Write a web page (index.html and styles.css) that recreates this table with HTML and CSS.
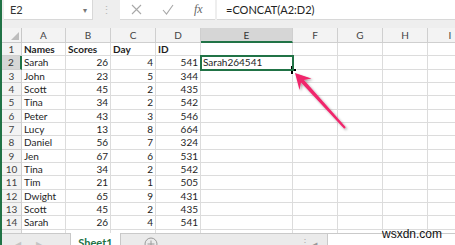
FILE: index.html
```html
<!DOCTYPE html>
<html>
<head>
<meta charset="utf-8">
<link rel="stylesheet" href="styles.css">
</head>
<body>
<div class="app">
  <div class="toolbar">
    <div class="namebox"><span>E2</span><span class="dd">▾</span></div>
    <div class="sep">⋮</div>
    <div class="icons">
      <svg width="94" height="20" viewBox="0 0 94 20">
        <path d="M12 5 L21 14 M21 5 L12 14" stroke="#a8a8a8" stroke-width="1.1" fill="none"/>
        <path d="M43 10 L46.5 14 L53 5" stroke="#a8a8a8" stroke-width="1.1" fill="none"/>
      </svg>
      <span class="fx">fx</span>
    </div>
    <div class="formula">=CONCAT(A2:D2)</div>
  </div>
  <div class="sheet">
    <div class="grid">
      <div class="corner"><svg width="10" height="10" viewBox="0 0 10 10"><path d="M9 1 L9 9 L1 9 Z" fill="#bdbdbd"/></svg></div>
      <div class="ch">A</div><div class="ch">B</div><div class="ch">C</div><div class="ch">D</div><div class="ch ch-sel">E</div><div class="ch">F</div><div class="ch">G</div><div class="ch">H</div><div class="ch">I</div>

      <div class="rh">1</div><div class="c b">Names</div><div class="c b">Scores</div><div class="c b">Day</div><div class="c b">ID</div><div class="c"></div><div class="c"></div><div class="c"></div><div class="c"></div><div class="c"></div>
      <div class="rh rh-sel">2</div><div class="c">Sarah</div><div class="c n">26</div><div class="c n">4</div><div class="c n">541</div><div class="c sel">Sarah264541</div><div class="c"></div><div class="c"></div><div class="c"></div><div class="c"></div>
      <div class="rh">3</div><div class="c">John</div><div class="c n">23</div><div class="c n">5</div><div class="c n">344</div><div class="c"></div><div class="c"></div><div class="c"></div><div class="c"></div><div class="c"></div>
      <div class="rh">4</div><div class="c">Scott</div><div class="c n">45</div><div class="c n">2</div><div class="c n">435</div><div class="c"></div><div class="c"></div><div class="c"></div><div class="c"></div><div class="c"></div>
      <div class="rh">5</div><div class="c">Tina</div><div class="c n">34</div><div class="c n">2</div><div class="c n">542</div><div class="c"></div><div class="c"></div><div class="c"></div><div class="c"></div><div class="c"></div>
      <div class="rh">6</div><div class="c">Peter</div><div class="c n">43</div><div class="c n">3</div><div class="c n">546</div><div class="c"></div><div class="c"></div><div class="c"></div><div class="c"></div><div class="c"></div>
      <div class="rh">7</div><div class="c">Lucy</div><div class="c n">13</div><div class="c n">8</div><div class="c n">664</div><div class="c"></div><div class="c"></div><div class="c"></div><div class="c"></div><div class="c"></div>
      <div class="rh">8</div><div class="c">Daniel</div><div class="c n">56</div><div class="c n">7</div><div class="c n">324</div><div class="c"></div><div class="c"></div><div class="c"></div><div class="c"></div><div class="c"></div>
      <div class="rh">9</div><div class="c">Jen</div><div class="c n">67</div><div class="c n">6</div><div class="c n">531</div><div class="c"></div><div class="c"></div><div class="c"></div><div class="c"></div><div class="c"></div>
      <div class="rh">10</div><div class="c">Tina</div><div class="c n">34</div><div class="c n">2</div><div class="c n">542</div><div class="c"></div><div class="c"></div><div class="c"></div><div class="c"></div><div class="c"></div>
      <div class="rh">11</div><div class="c">Tim</div><div class="c n">21</div><div class="c n">1</div><div class="c n">505</div><div class="c"></div><div class="c"></div><div class="c"></div><div class="c"></div><div class="c"></div>
      <div class="rh">12</div><div class="c">Dwight</div><div class="c n">65</div><div class="c n">9</div><div class="c n">431</div><div class="c"></div><div class="c"></div><div class="c"></div><div class="c"></div><div class="c"></div>
      <div class="rh">13</div><div class="c">Scott</div><div class="c n">45</div><div class="c n">2</div><div class="c n">435</div><div class="c"></div><div class="c"></div><div class="c"></div><div class="c"></div><div class="c"></div>
      <div class="rh">14</div><div class="c">Sarah</div><div class="c n">26</div><div class="c n">4</div><div class="c n">541</div><div class="c"></div><div class="c"></div><div class="c"></div><div class="c"></div><div class="c"></div>
      <div class="rh">15</div><div class="c"></div><div class="c"></div><div class="c"></div><div class="c"></div><div class="c"></div><div class="c"></div><div class="c"></div><div class="c"></div><div class="c"></div>
    </div>
  </div>
  <div class="tabbar">
    <div class="nav"><span>◀</span><span>▶</span></div>
    <div class="tab">Sheet1</div>
    <div class="add"><svg width="14" height="14" viewBox="0 0 14 14"><circle cx="7" cy="7" r="6" fill="none" stroke="#9a9a9a" stroke-width="1"/><path d="M7 3.5 V10.5 M3.5 7 H10.5" stroke="#9a9a9a" stroke-width="1"/></svg></div>
    <div class="spacer"></div>
    <div class="sep2">⋮</div>
    <div class="left">◀</div>
    <div class="scroll"></div>
  </div>
  <svg class="overlay" width="455" height="245" viewBox="0 0 455 245">
    <defs>
      <filter id="sh" x="-20%" y="-20%" width="150%" height="150%">
        <feDropShadow dx="1.5" dy="1.5" stdDeviation="1.2" flood-color="#000" flood-opacity="0.35"/>
      </filter>
    </defs>
    <polygon filter="url(#sh)" fill="#f0286c" points="295,73 311.5,78.5 304,80 345.8,127.2 344.2,128.8 301,82.6 299.5,90"/>
    <path d="M292 65.5 V74.5 M287.5 70 H296.5" stroke="#fff" stroke-width="4"/>
    <path d="M292 66 V74 M288 70 H296" stroke="#000" stroke-width="2"/>
  </svg>
  <div class="watermark">wsxdn.com</div>
</div>
</body>
</html>
```
FILE: styles.css
```css
* { box-sizing: border-box; }
html, body { margin: 0; padding: 0; }
body { width: 455px; height: 245px; overflow: hidden; background: #fff; font-family: Lato, "Liberation Sans", sans-serif; }
.app { position: relative; width: 455px; height: 245px; overflow: hidden; border-left: 2px solid #217346; background: #eeeeee; display: flex; flex-direction: column; }
.toolbar { height: 28px; flex: none; display: flex; align-items: flex-start; background: #eeeeee; }
.namebox { margin-left: 2px; width: 89px; height: 20px; background: #fff; display: flex; align-items: center; justify-content: space-between; padding: 0 5px 0 6px; font-size: 11px; color: #333; border-right: 1px solid #d8d8d8; border-bottom: 1px solid #d8d8d8; }
.dd { font-size: 8px; color: #777; }
.sep { width: 27px; height: 20px; display: flex; align-items: center; justify-content: center; color: #b8b8b8; font-size: 11px; }
.icons { width: 95px; height: 20px; background: #fff; position: relative; display: flex; align-items: center; border-bottom: 1px solid #d8d8d8; }
.icons svg { display: block; }
.fx { position: absolute; left: 74px; top: 2px; font-family: "Liberation Serif", serif; font-style: italic; font-size: 12px; color: #666; }
.formula { flex: 1; height: 20px; margin-left: 2px; background: #fff; padding-left: 9px; font-size: 11px; line-height: 20px; color: #222; border-bottom: 1px solid #d8d8d8; }
.sheet { height: 205px; flex: none; overflow: hidden; background: #fff; }
.grid { display: grid; grid-template-columns: 20px 44px 45px 45px 45px 92px 45px 45px 45px 45px; grid-template-rows: 15px; grid-auto-rows: 13.33px; width: 471px; }
.grid > div { border-right: 1px solid #dcdcdc; border-bottom: 1px solid #dcdcdc; font-size: 10px; line-height: 12px; color: #1e1e1e; white-space: nowrap; overflow: visible; }
.corner { background: #f3f3f3; display: flex; align-items: flex-end; justify-content: flex-end; padding: 0 1px 1px 0; border-color: #c8c8c8 !important; }
.corner svg { display: block; }
.grid > .ch { background: #f3f3f3; text-align: center; line-height: 14px; color: #444; border-color: #cfcfcf; }
.grid > .ch-sel { background: #d6d6d6; border-bottom: 2px solid #217346; color: #333; }
.grid > .rh { background: #f3f3f3; text-align: center; color: #444; border-color: #cfcfcf; }
.grid > .rh-sel { background: #d6d6d6; border-right: 2px solid #217346; color: #333; }
.c { padding-left: 2px; }
.grid > .n { text-align: right; padding-right: 2px; padding-left: 0; }
.b { font-weight: 700; }
.grid > .sel { outline: 2px solid #217346; outline-offset: -1px; position: relative; z-index: 1; padding-left: 2px; }
.tabbar { height: 24px; flex: none; display: flex; align-items: stretch; background: #ebebeb; border-top: 1px solid #cacaca; }
.nav { width: 68px; display: flex; gap: 15px; padding: 5px 0 0 13px; color: #c4c4c4; font-size: 8px; }
.tab { width: 51px; background: #fff; border-left: 1px solid #c8c8c8; border-right: 1px solid #c8c8c8; margin-top: -1px; color: #217346; font-weight: 700; font-size: 11px; text-align: center; padding-top: 3px; }
.add { width: 62px; padding: 3px 0 0 23px; }
.add svg { display: block; }
.spacer { flex: 1; }
.sep2 { width: 12px; color: #b0b0b0; font-size: 10px; padding-top: 2px; }
.left { width: 15px; color: #999; font-size: 7px; padding-top: 6px; }
.scroll { width: 128px; background: #fff; border-left: 1px solid #cacaca; }
.overlay { position: absolute; left: -2px; top: 0; pointer-events: none; }
.watermark { position: absolute; left: 380px; top: 227px; font-family: "Liberation Sans", Arial, sans-serif; font-size: 12px; color: #111; }
```
